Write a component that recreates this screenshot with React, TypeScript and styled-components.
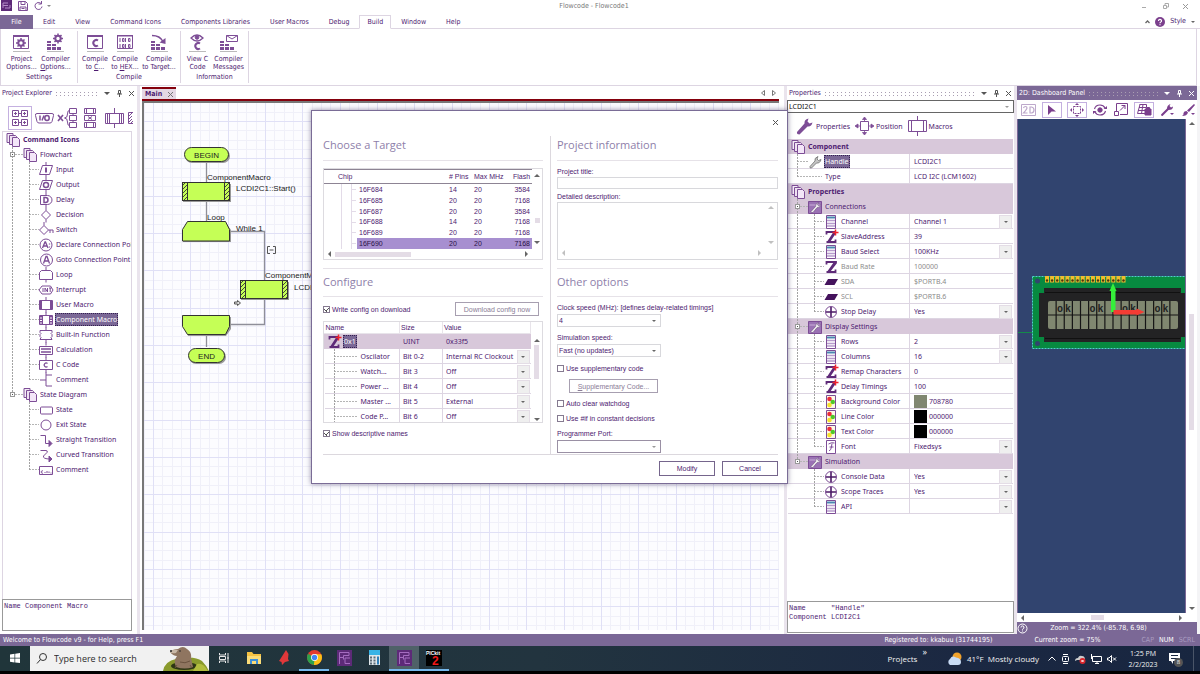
import React from 'react';
import styled, { createGlobalStyle, css } from 'styled-components';

const ink = '#4d1a70';
const stroke = '#7d4d96';
const band = '#d8c8da';
const bar = '#7b6896';
const line = '#ddd5e2';
const uiFont = '"DejaVu Sans Condensed", "DejaVu Sans", sans-serif';
const gridFont = '"Noto Sans", sans-serif';
const dialogFont = '"Liberation Sans", Arial, sans-serif';
const monoFont = '"Liberation Mono", monospace';

const Global = createGlobalStyle`
  *, *::before, *::after { box-sizing: border-box; }
  html, body { margin: 0; background: #fff; }
  body { font: 7px/9px ${uiFont}; color: ${ink}; }
  button, input, select, textarea { font: inherit; color: inherit; margin: 0; padding: 0; border: 0; border-radius: 0; background: none; }
  ul { list-style: none; margin: 0; padding: 0; }
  svg { display: block; flex: none; overflow: visible; }
`;

const Screen = styled.div`
  position: relative;
  display: flex;
  flex-direction: column;
  min-height: 100vh;
  overflow: hidden;
`;

/* ---------- icons ---------- */

const iconShapes: Record<string, React.ReactNode> = {
  folders: (
    <>
      <path d="M1 .5h6v9h-6z" fill="#f5ecf7" />
      <path d="M3.500 2.500h6l1 1v8h-7z" fill="#efe2f2" />
      <path d="M6.500 4.500h5l2 2v7h-7z" fill="#f3e6f8" />
    </>
  ),
  input: <><path d="M7 -1v3M7 12v2M3.500 2.500h10l-3 9h-10z" fill="none" /><path d="M7 4.500v5" strokeWidth="2" /></>,
  output: <><path d="M7 -1v3M7 12v2M3.500 2.500h10l-3 9h-10z" fill="none" /><circle cx="7" cy="7" r="2.500" fill="none" strokeWidth="1.500" /></>,
  delay: <><path d="M7 -1v3M7 12v2M1.500 2.500h7a4 4 0 0 1 0 9h-7z" fill="none" /><path d="M5 4.500h1.500a2.500 2.500 0 0 1 0 5H5z" fill="none" strokeWidth="1.500" /></>,
  decision: <path d="M7 -1v3.500M7 11.500v3M7 2.500l4.500 4.500L7 11.500 2.500 7z" fill="none" />,
  switch: <path d="M5 -1v3.500M5 2.500l4.500 4.500L5 11.500.500 7zM9.500 7h4.500v3M11 7v3" fill="none" />,
  declare: <><circle cx="7" cy="7" r="6" fill="none" /><path d="M3.500 10l2.500-6h.500l2.500 6M4.500 8h3.500M10.500 5.500v1M10.500 8.500v1" fill="none" strokeWidth="1.300" /></>,
  goto: <><circle cx="7.500" cy="7" r="6" fill="none" /><path d="M4.500 10.500l2.500-7h1l2.500 7M5.500 8h4" fill="none" strokeWidth="1.300" /></>,
  loop: <path d="M7 -1v3.500M7 11.500v3M.500 11.500V4.500l2-2h9l2 2v7z" fill="none" />,
  interrupt: <><path d="M3 3h8.500l2.500 4-2.500 4H3L0 7z" fill="none" /><path d="M4 5v4M6 9V5l2.500 4V5M10 5h2.500M11.200 5v4" fill="none" /></>,
  userMacro: <><path d="M7 -1v3.500M7 11.500v3M.500 2.500h13v9H.500z" fill="none" /><path d="M2 3v8M12 3v8" strokeWidth="2" /></>,
  componentMacro: <><path d="M7 -1v3.500M7 11.500v3M.500 2.500h13v9H.500zM3.500 3v8M10.500 3v8" fill="none" /><path d="M2 3v8M12 3v8" strokeWidth="2" strokeDasharray="1.500 1" /></>,
  builtIn: <path d="M7 -1v3.500M7 11.500v3M1 2.500h12M1 11.500h12M1 2.500v2l1 1-1 1v2l1 1-1 2M13 2.500v2l-1 1 1 1v2l-1 1 1 2" fill="none" />,
  calculation: <><path d="M7 -1v3.500M7 11.500v3M.500 3.500h13v8H.500z" fill="none" /><path d="M2 6h10M2 9h10" strokeWidth="1.500" /></>,
  cCode: <><path d="M7 -1v3.500M7 11.500v3M.500 2.500h13v9H.500z" fill="none" /><path d="M8.500 5.500a2 2 0 1 0 0 3" fill="none" strokeWidth="1.300" /></>,
  bracket: <path d="M7 -1v3M1 7h6M13 2H7v11h6" fill="none" />,
  state: <rect x="1.500" y="4" width="12" height="7" rx="1" fill="none" />,
  exitState: <circle cx="7" cy="7" r="5" fill="none" />,
  straight: <><path d="M1.500 2.500h5v8h5" fill="none" /><path d="M10 7.500l3 3-3 3z" fill={stroke} /></>,
  curved: <><path d="M1.500 2.500h5.500q2 0 1 2L4.500 8q-1 3 7 3" fill="none" /><path d="M10 8l3 3-3 3z" fill={stroke} /></>,
  stateComment: <><path d="M.500 3.500h13v8H.500z" fill="none" /><path d="M4 8a1.200 1.200 0 1 0 0 2M6 9v1M8 8v2M10 8.500v1.500M11.500 10h1" fill="none" /></>,
  wrenchGrey: <path d="M2 11.500l5-5.500q-1-3 3-4.500l-1 2.500 1.500 1.500L13 4.500q-1 4-4.500 3.500L3.500 13q-2 .5-1.500-1.500z" fill="#c4c4c4" stroke="#6e6e6e" strokeWidth=".8" />,
  group: <><path d="M.500 1.500h13v12H.500z" fill="#9a72b4" /><path d="M1.500 5h11" stroke="#c9aed8" /><path d="M3 11.500l4.500-5q-.5-3 3-4l-1 2.200 1 1 2.200-1q-.5 3.200-3.700 3L5 12.500q-2 .5-2-1z" fill="#eee" stroke="#6c4a80" strokeWidth=".6" /></>,
  list: <><path d="M2.500.500h9v13h-9z" fill="#fff" /><path d="M3 2.500h8" stroke="#4a86b0" strokeWidth="2" /><path d="M3 5.500h8M3 8.500h8M3 11h8" stroke="#b79ccc" strokeWidth="1.600" /></>,
  z: <path d="M2.500 4.500V2h9.500v1L5 12h6.500v-2.500M11 2L4 12H2.500" fill="none" stroke="#5e2a78" strokeWidth="1.800" />,
  zPlus: <><path d="M2.500 4.500V2H11v1L5 12h6.500v-2.500M10.500 2L4 12H2.500" fill="none" stroke="#5e2a78" strokeWidth="1.800" /><path d="M11.500-.5v6M8.500 2.500h6" stroke="#f0242c" strokeWidth="1.500" /></>,
  pin: <path d="M4 4h10l-3.500 6H.500z" fill="#44125c" stroke="none" />,
  cross: <><circle cx="7" cy="7" r="5.500" fill="none" /><path d="M7 2v10M2 7h10" stroke="#4b1a66" strokeWidth="1.600" /></>,
  color: <><path d="M2.500.500h9v13h-9z" fill="#fdfae6" /><circle cx="5.500" cy="4" r="2.300" fill="#ee2d3a" stroke="none" /><circle cx="8.700" cy="7" r="2.300" fill="#50c828" stroke="none" /><circle cx="5.500" cy="10" r="2.300" fill="#f6e22a" stroke="none" /></>,
  font: <><path d="M2.500.500h9v13h-9z" fill="#fff" /><path d="M4.500 4q3-2 6-1M8 3.500q-1 8-3 7M5.500 7h4" fill="none" /></>,
};

const Icon = ({ name }: { name: string }) => (
  <svg width="14" height="14" viewBox="0 0 14 14" stroke={stroke} strokeWidth="1" aria-hidden="true">
    {iconShapes[name]}
  </svg>
);

const Tri = styled.i<{ $dir?: 'up' | 'down' | 'left' | 'right'; $c?: string; $s?: number }>`
  display: block;
  flex: none;
  width: 0;
  height: 0;
  border: ${p => p.$s ?? 3}px solid transparent;
  ${p => {
    const c = p.$c ?? '#666';
    switch (p.$dir) {
      case 'up': return css`border-top: 0; border-bottom-color: ${c};`;
      case 'left': return css`border-left: 0; border-right-color: ${c};`;
      case 'right': return css`border-right: 0; border-left-color: ${c};`;
      default: return css`border-bottom: 0; border-top-color: ${c};`;
    }
  }}
`;

const IconButton = styled.button<{ $w?: number; $h?: number; $framed?: boolean }>`
  display: flex;
  flex: none;
  align-items: center;
  justify-content: center;
  width: ${p => p.$w ?? 12}px;
  height: ${p => p.$h ?? 12}px;
  border: ${p => (p.$framed ? '1px solid #c4b0e0' : '0')};
`;

/* ---------- title bar, menu and ribbon ---------- */

const TitleBar = styled.header`
  display: grid;
  grid-template-columns: 1fr auto 1fr;
  align-items: center;
  height: 15px;
  padding: 0 12px 3px 0;
  color: #777;
`;
const QuickAccess = styled.div`
  display: flex;
  align-items: center;
  gap: 1px;
`;
const WindowButtons = styled(QuickAccess)`
  justify-content: flex-end;
  gap: 10px;
`;
const MenuBar = styled.nav`
  display: flex;
  height: 14px;
  border-bottom: 1px solid ${line};
`;
const MenuTab = styled.button<{ $kind?: 'file' | 'active' }>`
  flex: none;
  height: 14px;
  padding: 0 10px;
  border: 1px solid transparent;
  border-width: 1px 0;
  ${p => p.$kind === 'file' && css`background: ${bar}; color: #fff; width: 33px; border: 0;`}
  ${p => p.$kind === 'active' && css`background: #fff; border: 1px solid ${line}; border-bottom-color: #fff; padding: 0 7px;`}
`;
const MenuEnd = styled.div`
  display: flex;
  align-items: center;
  gap: 5px;
  margin-left: auto;
  padding-right: 5px;
`;
const Ribbon = styled.div`
  display: flex;
  height: 57px;
  padding: 2px 0;
  margin-right: 3px;
  border: 1px solid ${line};
  border-top: 0;
`;
const RibbonGroup = styled.section<{ $w: number }>`
  display: flex;
  flex: none;
  flex-direction: column;
  width: ${p => p.$w}px;
  border-right: 1px solid ${line};
`;
const RibbonButtons = styled.div`
  display: flex;
  flex: 1;
  justify-content: center;
`;
const RibbonButton = styled.button<{ $w: number }>`
  display: flex;
  flex-direction: column;
  align-items: center;
  width: ${p => p.$w}px;
  padding-top: 3px;
  line-height: 8px;
  white-space: nowrap;
`;
const RibbonIcon = styled.span`
  display: block;
  width: 17px;
  margin-bottom: 3px;
  border-bottom: 1px solid #bbb;
`;
const RibbonCaption = styled.h2`
  margin: 0;
  font: 7px/12px ${uiFont};
  text-align: center;
`;

const bars = <><path d="M0 7h4v2H0zM0 10h4v2H0zM0 13h4v3H0zM5 10h4v2H5zM5 13h4v3H5zM10 13h4v3h-4z" fill={stroke} stroke="none" /></>;
const gear = (cx: number, cy: number) => (
  <g transform={`translate(${cx} ${cy})`}>
    <circle r="2.700" fill="none" strokeWidth="2" />
    <path d="M0-5v2M0 3v2M-5 0h2M3 0h2M-3.500-3.500l1.500 1.500M2 2l1.500 1.500M-3.500 3.500L-2 2M2-2l1.500-1.500" strokeWidth="1.500" />
  </g>
);
const ribbonShapes: Record<string, React.ReactNode> = {
  project: <><path d="M.500 1.500h15v13H.500z" fill="none" /><path d="M0 1h16v2H0z" fill={stroke} stroke="none" />{gear(8, 9)}</>,
  compiler: <>{bars}{gear(11, 4.5)}</>,
  toC: <><path d="M.500 1.500h15v13H.500z" fill="none" /><path d="M0 1h16v2H0z" fill={stroke} stroke="none" /><path d="M11 6.500a3 3 0 1 0 0 5" fill="none" strokeWidth="2" /></>,
  toHex: <><path d="M.500 1.500h15v13H.500z" fill="none" /><path d="M3 4v4M8.500 4v4M3 10v4M8.500 10v4M5.500 4.500h1.500v3H5.500zM11.500 4.500H13v3h-1.500zM5.500 10.500h1.500v3H5.500zM11.500 10.500H13v3h-1.500z" fill="none" /><path d="M0 1h16v1.500H0z" fill={stroke} stroke="none" /></>,
  toTarget: <>{bars}<path d="M1 1.500q8 0 11 6" fill="none" strokeWidth="1.500" /><path d="M8.500 8.500L14.500 4v6z" fill={stroke} stroke="none" /></>,
  viewC: <><path d="M2 4q6-6 12 0-6 6-12 0z" fill="none" strokeWidth="1.300" /><circle cx="8" cy="3.500" r="1.800" fill={stroke} /><path d="M11 9.500a3 3 0 1 0 0 5" fill="none" strokeWidth="2" /></>,
  messages: <>{bars}<path d="M6.500 1.500h11v6h-11zM6.500 1.500l5.500 3.500 5.500-3.500" fill="#fff" /></>,
};

type RibbonItem = { icon: string; w: number; lines: [React.ReactNode, React.ReactNode] };
const ribbon: { title: string; w: number; items: RibbonItem[] }[] = [
  { title: 'Settings', w: 77, items: [
    { icon: 'project', w: 33, lines: ['Project', 'Options...'] },
    { icon: 'compiler', w: 35, lines: ['Compiler', <><u>O</u>ptions...</>] },
  ] },
  { title: 'Compile', w: 103, items: [
    { icon: 'toC', w: 30, lines: ['Compile', <>to <u>C</u>...</>] },
    { icon: 'toHex', w: 30, lines: ['Compile', <>to <u>H</u>EX...</>] },
    { icon: 'toTarget', w: 38, lines: ['Compile', 'to Target...'] },
  ] },
  { title: 'Information', w: 68, items: [
    { icon: 'viewC', w: 28, lines: ['View C', 'Code'] },
    { icon: 'messages', w: 34, lines: ['Compiler', 'Messages'] },
  ] },
];

const menus = ['Edit', 'View', 'Command Icons', 'Components Libraries', 'User Macros', 'Debug', 'Build', 'Window', 'Help'];

const TopArea = () => (
  <>
    <TitleBar>
      <QuickAccess>
        <svg width="12" height="12" viewBox="0 0 12 12"><path d="M1 0h11v11H1z" fill="#5d2a78" /><path d="M3 8V3h5M5 8h5V5M3 5.500h5" stroke="#b48cc8" fill="none" /></svg>
        <IconButton $w={20} aria-label="Save"><svg width="10" height="10" viewBox="0 0 10 10" stroke={stroke} fill="none"><path d="M.500.500h7l2 2v7h-9zM3 .500v3h4v-3M2 9.500V6h6v3.500M3.500 7.500h3" /></svg></IconButton>
        <IconButton $w={8} aria-label="Redo"><svg width="9" height="10" viewBox="0 0 9 10" stroke={stroke} fill="none"><path d="M7 2.500a3.500 3.500 0 1 0 1 3M7.500 0v3H4.500" /></svg></IconButton>
        <IconButton aria-label="Customise"><Tri $s={2} $c="#888" /></IconButton>
      </QuickAccess>
      <span>Flowcode - Flowcode1</span>
      <WindowButtons>
        <IconButton aria-label="Minimise"><svg width="5" height="5" stroke="#aaa"><path d="M0 3.500h4" /></svg></IconButton>
        <IconButton aria-label="Restore"><svg width="6" height="6" stroke="#aaa" fill="none"><path d="M.500 2.500h3v3h-3zM2 2V.500h3.500V4H4" /></svg></IconButton>
        <IconButton $w={6} aria-label="Close"><svg width="5" height="5" stroke="#999"><path d="M0 0l5 5M5 0L0 5" /></svg></IconButton>
      </WindowButtons>
    </TitleBar>
    <MenuBar>
      <MenuTab $kind="file">File</MenuTab>
      {menus.map(m => <MenuTab key={m} $kind={m === 'Build' ? 'active' : undefined}>{m}</MenuTab>)}
      <MenuEnd>
        <svg width="5" height="4" stroke="#666" fill="none"><path d="M.500 3L2.500 1l2 2" strokeWidth="1.300" /></svg>
        <svg width="10" height="10" viewBox="0 0 10 10"><circle cx="5" cy="5" r="5" fill="#7b3f8d" /><path d="M3.500 4a1.500 1.500 0 1 1 2 1.300q-.5.2-.5 1M5 7.300v1" stroke="#fff" fill="none" strokeWidth="1.200" /></svg>
        <span>Style</span>
        <Tri $s={2} />
      </MenuEnd>
    </MenuBar>
    <Ribbon>
      {ribbon.map(g => (
        <RibbonGroup key={g.title} $w={g.w}>
          <RibbonButtons>
            {g.items.map(i => (
              <RibbonButton key={i.icon} $w={i.w}>
                <RibbonIcon><svg width="16" height="17" viewBox="0 0 16 17" stroke={stroke}>{ribbonShapes[i.icon]}</svg></RibbonIcon>
                <span>{i.lines[0]}</span>
                <span>{i.lines[1]}</span>
              </RibbonButton>
            ))}
          </RibbonButtons>
          <RibbonCaption>{g.title}</RibbonCaption>
        </RibbonGroup>
      ))}
    </Ribbon>
  </>
);

/* ---------- panels ---------- */

const Workspace = styled.main`
  display: flex;
  flex: 1;
  min-height: 0;
`;
const Panel = styled.section<{ $w: number }>`
  display: flex;
  flex: none;
  flex-direction: column;
  width: ${p => p.$w}px;
`;
const Splitter = styled.div`
  flex: none;
  width: 3px;
  background: #eae4ed;
`;
const PanelHeader = styled.header<{ $dark?: boolean }>`
  display: flex;
  flex: none;
  align-items: center;
  height: 14px;
  padding: 1px 0 0 2px;
  background: ${p => (p.$dark ? bar : '#fff')};
  color: ${p => (p.$dark ? '#fff' : ink)};
`;
const PanelTitle = styled.h2`
  margin: 0;
  font: inherit;
`;
const Dots = styled.span`
  flex: 1;
  height: 4px;
  margin: 1px 3px 0 4px;
  background:
    linear-gradient(#b9afc0, #b9afc0) 0 0 / 1px 1px,
    linear-gradient(#b9afc0, #b9afc0) 0 0 / 1px 1px;
  background: conic-gradient(from 0deg at 1px 1px, transparent 75%, #a99eb2 0) 0 0 / 4px 3px;
`;

const PanelTop = ({ title, dark }: { title: string; dark?: boolean }) => {
  const c = dark ? '#fff' : '#555';
  return (
    <PanelHeader $dark={dark}>
      <PanelTitle>{title}</PanelTitle>
      <Dots />
      <IconButton aria-label="Panel menu"><Tri $c={c} /></IconButton>
      <IconButton aria-label="Pin"><svg width="5" height="7" stroke={c} fill="none"><path d="M1.500.500h2v3h-2zM0 4h5M2.500 4v3" /></svg></IconButton>
      <IconButton aria-label="Close panel"><svg width="5" height="5" stroke={c}><path d="M0 0l5 5M5 0L0 5" /></svg></IconButton>
    </PanelHeader>
  );
};

const ExplorerTools = styled.div`
  display: flex;
  align-items: center;
  gap: 3px;
  height: 31px;
  padding: 5px 0 1px 8px;
  overflow: hidden;
`;

/* Tree branches: each gutter carries its vertical and horizontal dotted lines. */
const Gutter = styled.span<{ $w: number; $x: number; $v?: 'full' | 'half'; $h?: boolean }>`
  display: flex;
  flex: none;
  align-items: center;
  width: ${p => p.$w}px;
  height: 15px;
  padding-left: ${p => p.$x - 2}px;
  background-repeat: no-repeat;
  background-image:
    ${p => (p.$v ? 'repeating-linear-gradient(#a3a3a3 0 2px, transparent 2px 3px)' : 'none')},
    ${p => (p.$h ? 'repeating-linear-gradient(90deg, #b5b5b5 0 2px, transparent 2px 3px)' : 'none')};
  background-position: ${p => p.$x}px 0, ${p => p.$x}px 7px;
  background-size: 1px ${p => (p.$v === 'half' ? '8px' : '15px')}, 100% 1px;
`;
const Expander = styled.i`
  width: 5px;
  height: 5px;
  border: 1px solid #999;
  background: linear-gradient(#555, #555) 1px 1px / 1px 1px no-repeat #fff;
`;
const TreeBox = styled.div`
  flex: 1;
  margin: 0 5px 0 2px;
  border: 1px solid ${line};
  border-bottom: 0;
  overflow: hidden;
  font-family: ${gridFont};
`;
const TreeRow = styled.li`
  display: flex;
  align-items: center;
  height: 15px;
  white-space: nowrap;
`;
const NodeLabel = styled.span<{ $sel?: boolean; $strong?: boolean; $dim?: boolean }>`
  margin-left: 2px;
  padding: 0 1px;
  line-height: 13px;
  font-weight: ${p => (p.$strong ? 700 : 400)};
  color: ${p => (p.$sel ? '#fff' : p.$dim ? '#8d8d8d' : 'inherit')};
  ${p => p.$sel && css`background: ${bar}; outline: 1px dotted #332050; outline-offset: -1px;`}
`;
const NoteBox = styled.pre<{ $gap?: number }>`
  flex: none;
  height: 32px;
  margin: 0 ${p => p.$gap ?? 0}px 1px;
  padding: 2px 1px;
  border: 1px solid #999;
  font: 7px/9px ${monoFont};
`;
const ExplorerNote = styled(NoteBox)`
  margin: 0 5px 3px 2px;
`;

const flowNodes: [string, string][] = [
  ['input', 'Input'], ['output', 'Output'], ['delay', 'Delay'], ['decision', 'Decision'], ['switch', 'Switch'],
  ['declare', 'Declare Connection Point'], ['goto', 'Goto Connection Point'], ['loop', 'Loop'], ['interrupt', 'Interrupt'],
  ['userMacro', 'User Macro'], ['componentMacro', 'Component Macro'], ['builtIn', 'Built-in Function'],
  ['calculation', 'Calculation'], ['cCode', 'C Code'], ['bracket', 'Comment'],
];
const stateNodes: [string, string][] = [
  ['state', 'State'], ['exitState', 'Exit State'], ['straight', 'Straight Transition'], ['curved', 'Curved Transition'], ['stateComment', 'Comment'],
];

const Leaves = ({ nodes, rootLine }: { nodes: [string, string][]; rootLine?: boolean }) => (
  <>
    {nodes.map(([icon, label], i) => (
      <TreeRow key={icon}>
        <Gutter $w={20} $x={9} $v={rootLine ? 'full' : undefined} />
        <Gutter $w={16} $x={6} $v={i === nodes.length - 1 ? 'half' : 'full'} $h />
        <Icon name={icon} />
        <NodeLabel $sel={icon === 'componentMacro'}>{label}</NodeLabel>
      </TreeRow>
    ))}
  </>
);

const Explorer = () => (
  <Panel $w={137}>
    <PanelTop title="Project Explorer" />
    <ExplorerTools>
      <IconButton $w={24} $h={24} $framed aria-label="Command icons"><svg width="16" height="16" viewBox="0 0 16 16" stroke={stroke} fill="none"><path d="M.500.500h6v6h-6zM9.500.500h6v6h-6zM.500 9.500h6v6h-6zM9.500 9.500h6v6h-6zM3.500 2v3M2 3.500h3M12.500 2v3M11 3.500h3M3.500 11v3M2 12.500h3M12.500 11v3M11 12.500h3M6.500 3.500h3M6.500 12.500h3" /></svg></IconButton>
      <IconButton $w={19} $h={24} aria-label="Ports"><svg width="19" height="12" viewBox="0 0 19 12" stroke={stroke} fill="none"><path d="M2 1.500h15q2 0 1.500 2l-1.500 6q-.5 1.500-2 1.500H4q-1.500 0-2-1.500l-1.500-6q-.5-2 1.500-2z" /><path d="M5 3.500v5M9 3.500l-2 5" strokeWidth="1.500" /><ellipse cx="12" cy="6" rx="2.200" ry="2.500" strokeWidth="1.500" /></svg></IconButton>
      <IconButton $w={20} $h={24} aria-label="Variables"><svg width="20" height="20" viewBox="0 0 20 20" stroke={stroke} fill="none"><path d="M1 7l5 6M6 7l-5 6" strokeWidth="1.600" /><path d="M7.500 10q3 0 3-4t2-3.500M7.500 10q3 0 3 4t2 3.500M12.500.500h7v5h-7zM12.500 7.500h7v5h-7zM12.500 14.500h7v5h-7zM16 5.500v2M16 12.500v2" /></svg></IconButton>
      <IconButton $w={20} $h={24} aria-label="Macros"><svg width="12" height="20" viewBox="0 0 12 20" stroke={stroke} fill="none"><path d="M.500.500h11v5H.500zM.500 7.500h11v5H.500zM.500 14.500h11v5H.500zM2.500.500v5M9.500.500v5M4 8.500l4 3M8 8.500l-4 3M2.500 14.500v5M9.500 14.500v5" /></svg></IconButton>
      <IconButton $w={22} $h={24} aria-label="Blocks"><svg width="19" height="20" viewBox="0 0 19 20" stroke={stroke} fill="none"><path d="M.500 5.500h18v10H.500zM2.500 5.500v10M4.500 5.500v10M14.500 5.500v10M16.500 5.500v10M9.500 0v5M9.500 16v4" /></svg></IconButton>
      <IconButton $w={5} $h={24} aria-label="More"><svg width="5" height="12" viewBox="0 0 5 12" stroke={stroke} fill="none"><path d="M5 .500H.500v11H5M1 4l3-3M1 7l3-3M1 10l3-3M3 11l2-2" /></svg></IconButton>
    </ExplorerTools>
    <TreeBox>
      <ul>
        <TreeRow><Gutter $w={3} $x={2} /><Icon name="folders" /><NodeLabel $strong>Command Icons</NodeLabel></TreeRow>
        <TreeRow><Gutter $w={20} $x={9} $v="full" $h><Expander /></Gutter><Icon name="folders" /><NodeLabel>Flowchart</NodeLabel></TreeRow>
        <Leaves nodes={flowNodes} rootLine />
        <TreeRow><Gutter $w={20} $x={9} $v="half" $h><Expander /></Gutter><Icon name="folders" /><NodeLabel>State Diagram</NodeLabel></TreeRow>
        <Leaves nodes={stateNodes} />
      </ul>
    </TreeBox>
    <ExplorerNote>Name Component Macro</ExplorerNote>
  </Panel>
);

/* ---------- flowchart document ---------- */

const Document = styled.section`
  display: flex;
  flex: 1;
  flex-direction: column;
  min-width: 0;
  padding: 1px 5px 4px 2px;
`;
const TabStrip = styled.div`
  display: flex;
  flex: none;
  height: 14px;
  border-bottom: 2px solid #84000c;
`;
const DocTab = styled.button`
  display: flex;
  align-items: center;
  gap: 6px;
  height: 12px;
  padding: 0 3px;
  border-top: 2px solid #84000c;
  background: #e4d8e4;
  font-weight: 700;
`;
const TabArrows = styled.div`
  display: flex;
  align-items: center;
  gap: 7px;
  margin-left: auto;
  padding-right: 3px;
`;
const Canvas = styled.svg`
  flex: 1;
  width: 100%;
  min-height: 0;
  border: solid #777;
  border-width: 2px 0 0 2px;
  background: #fcfcff;
  font: 8px ${dialogFont};
  overflow: hidden;
`;

const minor = [9, 19, 28, 47, 56, 65, 84, 93, 103];
const major = [0, 37, 75];
const gridPath = (at: number[]) => at.map(n => `M${n + 0.5} 0v112M0 ${n + 0.5}h112`).join('');

const MacroBox = ({ x, y }: { x: number; y: number }) => (
  <g transform={`translate(${x} ${y})`}>
    <rect x="1" y="2" width="48" height="18" fill="#999" />
    <rect x=".5" y=".5" width="47" height="18" fill="#c5ff56" stroke="#333" />
    <rect x=".5" y=".5" width="5" height="18" fill="url(#hatch)" stroke="#333" />
    <rect x="42.500" y=".5" width="5" height="18" fill="url(#hatch)" stroke="#333" />
  </g>
);
const Pill = ({ x, y, w, text }: { x: number; y: number; w: number; text: string }) => (
  <g transform={`translate(${x} ${y})`}>
    <rect x="1" y="2" width={w} height="14" rx="7" fill="#999" />
    <rect x=".5" y=".5" width={w - 1} height="14" rx="7" fill="#c5ff56" stroke="#333" />
    <text x={w / 2} y="11" textAnchor="middle">{text}</text>
  </g>
);

const Flowchart = () => (
  <Document>
    <TabStrip>
      <DocTab>Main <svg width="5" height="5" stroke="#777"><path d="M0 0l5 5M5 0L0 5" /></svg></DocTab>
      <TabArrows>
        <svg width="4" height="6" stroke="#777" fill="none"><path d="M3.500.500v5L.500 3z" /></svg>
        <svg width="4" height="6" stroke="#777" fill="none"><path d="M.500.500v5L3.500 3z" /></svg>
      </TabArrows>
    </TabStrip>
    <Canvas role="img" aria-label="Flowchart">
      <defs>
        <pattern id="paper" x="9" y="18" width="112" height="112" patternUnits="userSpaceOnUse">
          <path d={gridPath(minor)} stroke="#f0f0f9" />
          <path d={gridPath(major)} stroke="#e0e0f6" />
        </pattern>
        <pattern id="hatch" width="4" height="4" patternUnits="userSpaceOnUse">
          <rect width="4" height="4" fill="#c5ff56" />
          <path d="M-1 5L5-1M-1 1l2-2M3 5l2-2" stroke="#333" strokeWidth=".9" />
        </pattern>
      </defs>
      <rect width="100%" height="100%" fill="url(#paper)" />
      <g transform="translate(-144 -103)" fill="#222">
        <path d="M206.500 163v20M206.500 201v20M230 231.500h34.500V324.500H230M206.500 335v12" stroke="#8f8f99" strokeWidth="1.300" fill="none" />
        <Pill x={184} y={147} w={45} text="BEGIN" />
        <text x="207" y="180">ComponentMacro</text>
        <MacroBox x={182} y={182} />
        <text x="236" y="191">LCDI2C1::Start()</text>
        <text x="207" y="220">Loop</text>
        <path d="M188 223h38l5 7v12h-48v-12z" fill="#999" />
        <path d="M187.500 221.500h38l4 8v11.500h-47v-11.500z" fill="#c5ff56" stroke="#333" />
        <text x="236" y="231">While 1</text>
        <path d="M270 246.500h-2.500v7h2.500M273 246.500h2.500v7h-2.500M269.500 250h4" stroke="#555" fill="none" />
        <text x="265" y="278">ComponentM</text>
        <MacroBox x={240} y={280} />
        <text x="294" y="290">LCDI</text>
        <path d="M234.500 302h3v-1.500l3 2.500-3 2.500V304h-3z" fill="#ddd" stroke="#555" />
        <path d="M183 317h48v12l-5 7h-38z" fill="#999" />
        <path d="M182.500 315.500h47v11l-4 8h-38l-5-8z" fill="#c5ff56" stroke="#333" />
        <Pill x={188} y={348} w={37} text="END" />
      </g>
    </Canvas>
  </Document>
);

/* ---------- properties panel ---------- */

const Drop = styled.span<{ $flat?: boolean; $h?: number; $c?: string }>`
  position: relative;
  display: block;
  height: ${p => p.$h ?? 13}px;
  border: ${p => (p.$flat ? '0' : `1px solid ${p.$c ?? '#d8d8dc'}`)};
  select { appearance: none; display: block; width: 100%; height: 100%; padding: 0 16px 0 1px; outline: 0; }
  ${p => p.$flat && css`select { padding-left: 0; }`}
`;
const DropArrow = styled.span<{ $boxed?: boolean }>`
  position: absolute;
  top: 0;
  right: ${p => (p.$boxed ? 1 : 0)}px;
  bottom: 0;
  display: flex;
  align-items: center;
  justify-content: center;
  width: 13px;
  pointer-events: none;
  ${p => p.$boxed && css`background: #efefef; border: 1px solid #e4dde6;`}
`;
const Picker = ({ label, value, id, flat, h, c }: { label: string; value: string; id?: string; flat?: boolean; h?: number; c?: string }) => (
  <Drop $flat={flat} $h={h} $c={c}>
    <select id={id} aria-label={id ? undefined : label} defaultValue={value}><option>{value}</option></select>
    <DropArrow $boxed={flat}><Tri $s={2} $c={c ? '#999' : '#666'} /></DropArrow>
  </Drop>
);

const HandleCombo = styled.div`
  flex: none;
  font-family: ${gridFont};
  color: #111;
`;
const PropTools = styled.div`
  display: flex;
  align-items: center;
  gap: 5px;
  height: 26px;
  padding-left: 9px;
  font-family: ${gridFont};
`;
const PropTool = styled.button`
  display: flex;
  align-items: center;
  gap: 2px;
`;
const PropTable = styled.table`
  width: calc(100% - 2px);
  margin-left: 1px;
  border-collapse: collapse;
  table-layout: fixed;
  font-family: ${gridFont};
`;
const PropRow = styled.tr<{ $band?: boolean; $dim?: boolean }>`
  height: 15px;
  background: ${p => (p.$band ? band : '#fff')};
  color: ${p => (p.$dim ? '#8b8b8b' : ink)};
  th, td { height: 15px; padding: 0; font-weight: 400; text-align: left; white-space: nowrap; box-shadow: inset 0 -1px ${p => (p.$band ? 'transparent' : line)}; }
  td { padding-left: 4px; border-left: 1px solid ${p => (p.$band ? 'transparent' : line)}; }
`;
const Cell = styled.div`
  display: flex;
  align-items: center;
  height: 15px;
`;
const Swatch = styled.i`
  width: 13px;
  height: 13px;
  margin-right: 2px;
`;
const Spacer = styled.div`
  flex: 1;
`;

type Prop = { icon: string; name: string; value: string; pick?: boolean; dim?: boolean; color?: string };
const sections: { title: string; props: Prop[] }[] = [
  { title: 'Connections', props: [
    { icon: 'list', name: 'Channel', value: 'Channel 1', pick: true },
    { icon: 'zPlus', name: 'SlaveAddress', value: '39' },
    { icon: 'list', name: 'Baud Select', value: '100KHz', pick: true },
    { icon: 'z', name: 'Baud Rate', value: '100000', dim: true },
    { icon: 'pin', name: 'SDA', value: '$PORTB.4', dim: true },
    { icon: 'pin', name: 'SCL', value: '$PORTB.6', dim: true },
    { icon: 'cross', name: 'Stop Delay', value: 'Yes', pick: true },
  ] },
  { title: 'Display Settings', props: [
    { icon: 'list', name: 'Rows', value: '2', pick: true },
    { icon: 'list', name: 'Columns', value: '16', pick: true },
    { icon: 'zPlus', name: 'Remap Characters', value: '0' },
    { icon: 'zPlus', name: 'Delay Timings', value: '100' },
    { icon: 'color', name: 'Background Color', value: '708780', color: '#808770' },
    { icon: 'color', name: 'Line Color', value: '000000', color: '#000000' },
    { icon: 'color', name: 'Text Color', value: '000000', color: '#000000' },
    { icon: 'font', name: 'Font', value: 'Fixedsys', pick: true },
  ] },
  { title: 'Simulation', props: [
    { icon: 'cross', name: 'Console Data', value: 'Yes', pick: true },
    { icon: 'cross', name: 'Scope Traces', value: 'Yes', pick: true },
    { icon: 'list', name: 'API', value: '', pick: true },
  ] },
];

const Properties = () => (
  <Panel $w={227}>
    <PanelTop title="Properties" />
    <HandleCombo><Picker label="Component" value="LCDI2C1" c="#666" /></HandleCombo>
    <PropTools>
      <PropTool><svg width="18" height="18" viewBox="0 0 18 18"><path d="M1 15l7.500-8.500Q8 2.500 12.500 1.500l-1 3 2 2 3-1q-1 4.500-5 4L3.500 17.500Q.500 17.500 1 15z" fill={stroke} /></svg>Properties</PropTool>
      <PropTool><svg width="19" height="18" viewBox="0 0 19 18" stroke={stroke} fill={stroke}><path d="M5.500 4.500h8v9h-8z" fill="none" /><path d="M9.500 0l2 2.500h-4zM9.500 18l2-2.500h-4zM0 9l3-2v4zM19 9l-3-2v4zM3 9h2M14 9h2M9.500 2v2M9.500 14v2" strokeWidth=".8" /></svg>Position</PropTool>
      <PropTool><svg width="19" height="20" viewBox="0 0 19 20" stroke={stroke} fill="none"><path d="M.500 4.500h18v11H.500zM3.500 4.500v11M15.500 4.500v11M9.500 0v4M9.500 16v4" /></svg>Macros</PropTool>
    </PropTools>
    <PropTable>
      <colgroup><col style={{ width: '54%' }} /><col /></colgroup>
      <tbody>
        <PropRow $band><th colSpan={2}><Cell><Gutter $w={3} $x={2} /><Icon name="folders" /><NodeLabel $strong>Component</NodeLabel></Cell></th></PropRow>
        <PropRow><th><Cell><Gutter $w={20} $x={9} $v="full" $h /><Icon name="wrenchGrey" /><NodeLabel $sel>Handle</NodeLabel></Cell></th><td>LCDI2C1</td></PropRow>
        <PropRow><th><Cell><Gutter $w={34} $x={9} $v="half" $h /><NodeLabel>Type</NodeLabel></Cell></th><td>LCD I2C (LCM1602)</td></PropRow>
        <PropRow $band><th colSpan={2}><Cell><Gutter $w={3} $x={2} /><Icon name="folders" /><NodeLabel $strong>Properties</NodeLabel></Cell></th></PropRow>
        {sections.map((s, si) => {
          const last = si === sections.length - 1;
          return (
            <React.Fragment key={s.title}>
              <PropRow $band><th colSpan={2}><Cell><Gutter $w={20} $x={9} $v={last ? 'half' : 'full'} $h><Expander /></Gutter><Icon name="group" /><NodeLabel>{s.title}</NodeLabel></Cell></th></PropRow>
              {s.props.map((p, i) => (
                <PropRow key={p.name} $dim={p.dim}>
                  <th>
                    <Cell>
                      <Gutter $w={20} $x={9} $v={last ? undefined : 'full'} />
                      <Gutter $w={16} $x={6} $v={i === s.props.length - 1 ? 'half' : 'full'} $h />
                      <Icon name={p.icon} />
                      <NodeLabel $dim={p.dim}>{p.name}</NodeLabel>
                    </Cell>
                  </th>
                  <td>
                    {p.pick ? <Picker flat h={14} label={p.name} value={p.value} />
                      : <Cell>{p.color && <Swatch style={{ background: p.color }} />}{p.value}</Cell>}
                  </td>
                </PropRow>
              ))}
            </React.Fragment>
          );
        })}
      </tbody>
    </PropTable>
    <Spacer />
    <NoteBox>{'Name      "Handle"\nComponent LCDI2C1'}</NoteBox>
  </Panel>
);

/* ---------- dashboard panel ---------- */

const DashTools = styled.div`
  display: flex;
  flex: none;
  align-items: center;
  justify-content: space-between;
  height: 19px;
  padding: 0 1px 0 3px;
`;
const DashBody = styled.div`
  display: grid;
  flex: 1;
  grid-template-columns: 1fr 11px;
  grid-template-rows: 1fr 9px;
  min-height: 0;
`;
const Scene = styled.svg`
  width: 100%;
  height: 100%;
  min-height: 0;
  background: #31446f;
  border-left: 1px solid ${bar};
  border-right: 1px solid ${bar};
  overflow: hidden;
  font: 700 10px ${monoFont};
`;
const Scroll = styled.div<{ $row?: boolean; $pad?: number }>`
  display: flex;
  flex-direction: ${p => (p.$row ? 'row' : 'column')};
  align-items: center;
  justify-content: space-between;
  padding: ${p => (p.$row ? '0 4px' : `${p.$pad ?? 3}px 0`)};
`;
const Thumb = styled.i<{ $w: number; $h: number; $after?: number }>`
  width: ${p => p.$w}px;
  height: ${p => p.$h}px;
  background: #e4dce6;
  ${p => p.$after !== undefined && css`margin-bottom: auto; margin-top: ${p.$after}px;`}
`;
const ZoomBar = styled.footer`
  display: flex;
  flex: none;
  align-items: center;
  height: 12px;
  background: ${bar};
  color: #fff;
  span { flex: 1; padding-right: 28px; text-align: center; }
`;

const cells = Array.from({ length: 16 }, (_, i) => i);

const Dashboard = () => (
  <Panel $w={180}>
    <PanelTop title="2D: Dashboard Panel" dark />
    <DashTools>
      <IconButton $w={17} $h={13} aria-label="2D"><svg width="15" height="12" viewBox="0 0 15 12" stroke="#bda8cb" fill="none"><path d="M.500.500h14v11H.500z" /><path d="M2.500 4q.5-1.500 2-1.500t1.500 1.500q0 1-3.500 5h4M9 3h1.500q2.500.5 2.500 3t-2.500 3H9z" strokeWidth="1.200" /></svg></IconButton>
      <IconButton $w={20} $h={16} $framed aria-label="Select"><svg width="8" height="10" viewBox="0 0 8 10"><path d="M0 0l8 6.500H3.500L0 10z" fill="#7b3f8d" /></svg></IconButton>
      <IconButton $w={20} $h={16} $framed aria-label="Move"><svg width="14" height="14" viewBox="0 0 14 14" stroke="#7b3f8d"><path d="M3.500 3.500h7v7h-7z" fill="none" strokeDasharray="2 1" /><path d="M7 0l2 2H5zM7 14l2-2H5zM0 7l2-2v4zM14 7l-2-2v4z" fill="#7b3f8d" stroke="none" /></svg></IconButton>
      <IconButton $w={16} $h={16} aria-label="Rotate"><svg width="14" height="12" viewBox="0 0 14 12" stroke="#7b3f8d"><circle cx="7" cy="6" r="2.200" fill="#7b3f8d" /><path d="M1.500 5q1-4 5.500-4 3.500 0 5 3M12.500 7q-1 4-5.500 4-3.500 0-5-3" fill="none" strokeWidth="1.100" /><path d="M14 2v3h-3.500zM0 10V7h3.500z" fill="#7b3f8d" stroke="none" /></svg></IconButton>
      <IconButton $w={16} $h={16} aria-label="Scale"><svg width="14" height="13" viewBox="0 0 14 13" stroke="#7b3f8d" fill="none"><path d="M2.500 8V.500h11v11H6M.500 8.500h4v4h-4zM6 7.500l5-5M7.500 2.500H11V6" /></svg></IconButton>
      <IconButton $w={20} $h={16} $framed aria-label="Grid"><svg width="14" height="11" viewBox="0 0 14 11" stroke="#7b3f8d" fill="none"><path d="M2.500.500h7M2 3.500h7M1 6.500h7M.500 9.500h8M3 .500L.500 9.500M6 .5L4.500 9.500M9.500 .500v3" /><path d="M8 5h6v6H8zM9.500 5V3.500h3V5" fill="#7b3f8d" /></svg></IconButton>
      <IconButton $w={16} $h={16} aria-label="Tools"><svg width="13" height="12" viewBox="0 0 13 12"><path d="M0 10.500l6-6Q6 1 9.500 0L8.500 2l1.500 1.500 2-1q0 3.500-4.500 3.500l-6 6q-1.500 0-1.500-1.500zM9 9h4l-2 2z" fill="#7b3f8d" /></svg></IconButton>
      <IconButton $w={16} $h={16} aria-label="Brush"><svg width="13" height="12" viewBox="0 0 13 12"><path d="M12 0l1 1-6 7-2-1.500zM4.500 7L6 8.500Q5 12 0 12q2-1 1.500-3 .5-2 3-2zM9 9h4l-2 2z" fill="#7b3f8d" /></svg></IconButton>
    </DashTools>
    <DashBody>
      <Scene role="img" aria-label="LCD display">
        <g transform="translate(-1018 -119)">
          <path d="M1018 332.500h15" stroke="#148a4a" />
          <rect x="1032.500" y="276.500" width="160" height="72" fill="#078a40" stroke="#4fd3c8" strokeDasharray="2 1" />
          <circle cx="1037.500" cy="281" r="2.500" fill="#31446f" />
          <circle cx="1037.500" cy="343.500" r="2.500" fill="#31446f" />
          {cells.map(i => <g key={i}><rect x={1045 + i * 5.1} y="276" width="4" height="6.500" fill="#f2bd2c" /><circle cx={1047 + i * 5.1} cy="280.500" r="1.200" fill="#4a3510" /></g>)}
          <path d="M1044 288h137v5h12v44h-12v5h-137v-5h-5v-44h5z" fill="#232324" />
          <path d="M1045 292.500h135M1045 338.500h135" stroke="#111" />
          <rect x="1048" y="301" width="130" height="28" rx="2" fill="#808770" />
          <path d={cells.slice(1).map(i => `M${1048 + i * 8.125} 301v28`).join('') + 'M1048 315h130'} stroke="#151515" strokeWidth="1.200" />
          {[1, 5, 9, 13].map(i => <g key={i} fill="#222"><text x={1057 + (i - 1) * 8.125} y="312">o</text><text x={1065 + (i - 1) * 8.125} y="312">k</text></g>)}
          <path d="M1111 312v-21h-1.500l3.500-8 3.500 8H1115.500v21z" fill="#35f03a" />
          <path d="M1113.500 310h23v-1.500l8 3.500-8 3.500V314.500h-23z" fill="#f43c34" />
        </g>
      </Scene>
      <Scroll><Tri $dir="up" $s={3} /><Thumb $w={5} $h={116} $after={189} /><Tri $s={3} /></Scroll>
      <Scroll $row><Tri $dir="left" $s={3} /><Thumb $w={13} $h={5} style={{ marginRight: 8 }} /><Tri $dir="right" $s={3} /></Scroll>
    </DashBody>
    <ZoomBar>
      <svg width="11" height="11" viewBox="0 0 11 11"><circle cx="5.500" cy="5.500" r="4.500" fill={bar} stroke="#fff" /><path d="M4 4.500a1.500 1.500 0 1 1 2 1.300q-.5.200-.5 1M5.500 7.500v1" stroke="#fff" fill="none" /></svg>
      <span>Zoom = 322.4% (-85.78, 6.98)</span>
    </ZoomBar>
  </Panel>
);
const EdgeStrip = styled.div`
  flex: none;
  width: 3px;
  background: #f4f4f6;
`;

/* ---------- project options dialog ---------- */

const Dialog = styled.div`
  position: absolute;
  top: 110px;
  left: 311px;
  display: flex;
  flex-direction: column;
  width: 477px;
  height: 374px;
  padding: 0 9px 0 11px;
  border: 1px solid #7a6c96;
  background: #fff;
  box-shadow: 0 0 5px rgba(60, 50, 90, 0.55);
  font: 7px/9px ${dialogFont};
`;
const DialogTop = styled.div`
  display: flex;
  flex: none;
  justify-content: flex-end;
  height: 21px;
  padding-top: 5px;
  margin-right: -3px;
`;
const DialogBody = styled.div`
  display: grid;
  flex: none;
  grid-template-columns: 1fr 221px;
  gap: 14px;
  height: 323px;
  border-bottom: 1px solid #dcd8de;
`;
const Column = styled.div<{ $divided?: boolean }>`
  position: relative;
  display: flex;
  flex-direction: column;
  min-width: 0;
  ${p => p.$divided && css`&::after { content: ''; position: absolute; top: 4px; right: -8px; bottom: 0; width: 1px; background: #dcd8de; }`}
`;
const Heading = styled.h3<{ $ruled?: boolean }>`
  flex: none;
  height: 29px;
  margin: 0;
  border: 0 solid #e6e2e8;
  border-bottom-width: 1px;
  border-top-width: ${p => (p.$ruled ? 1 : 0)}px;
  margin-top: ${p => (p.$ruled ? 8 : 0)}px;
  font: 400 11px/26px "Open Sans", sans-serif;
  color: #8e80aa;
`;
const ChipBox = styled.div`
  display: grid;
  grid-template-columns: 1fr 10px;
  grid-template-rows: 1fr 10px;
  height: 92px;
  margin-top: 7px;
  border: 1px solid #dddbe0;
`;
const ChipTable = styled.table`
  width: 100%;
  height: 80px;
  border-collapse: collapse;
  table-layout: fixed;
  line-height: 9px;
  th, td { padding: 0 0 0 2px; font-weight: 400; text-align: left; white-space: nowrap; }
  thead th { height: 14px; border: solid #8d8494; border-width: 1px 0; }
  thead th:first-child { padding-left: 14px; }
  td:last-child { text-align: right; padding-right: 2px; }
`;
const ChipRow = styled.tr<{ $sel?: boolean }>`
  td:first-child {
    padding-left: 35px;
    background: linear-gradient(#e3dbe8, #e3dbe8) 17px 0 / 1px 100% no-repeat, linear-gradient(#e3dbe8, #e3dbe8) 27px 0 / 1px 100% no-repeat, linear-gradient(#e3dbe8, #e3dbe8) 28px 5px / 4px 1px no-repeat, linear-gradient(${p => (p.$sel ? '#a78fd0, #a78fd0' : '#fff, #fff')}) 33px 0 / 100% 100% no-repeat;
  }
  td + td { background: ${p => (p.$sel ? '#a78fd0' : 'none')}; }
  color: ${p => (p.$sel ? '#2a1145' : ink)};
`;
const Line = styled.div<{ $h?: number; $mt?: number }>`
  display: flex;
  flex: none;
  align-items: center;
  justify-content: space-between;
  height: ${p => p.$h ?? 9}px;
  margin-top: ${p => p.$mt ?? 0}px;
`;
const CheckLabel = styled.label`
  display: flex;
  align-items: center;
  gap: 2px;
`;
const Check = styled.input`
  appearance: none;
  width: 7px;
  height: 7px;
  border: 1px solid #857a90;
  background: #fff;
  &:checked {
    background:
      linear-gradient(45deg, transparent 40%, #555 40% 60%, transparent 60%) 0 2px / 3px 3px no-repeat,
      linear-gradient(-45deg, transparent 40%, #555 40% 60%, transparent 60%) 2px 0 / 4px 4px no-repeat;
  }
`;
const Push = styled.button<{ $w: number; $dim?: boolean; $h?: number }>`
  width: ${p => p.$w}px;
  height: ${p => p.$h ?? 14}px;
  border: 1px solid ${p => (p.$dim ? '#a79fb0' : '#75658c')};
  background: #fff;
  color: ${p => (p.$dim ? '#8a7d97' : ink)};
`;
const ConfigBox = styled.div`
  flex: none;
  height: 102px;
  border: 1px solid #dddbe0;
  overflow: hidden;
  display: grid;
  grid-template-columns: 1fr 11px;
`;
const ConfigTable = styled.table`
  width: 100%;
  border-collapse: collapse;
  table-layout: fixed;
  font-family: ${gridFont};
  th, td { padding: 0; font-weight: 400; text-align: left; white-space: nowrap; }
  thead th { height: 11px; line-height: 11px; border-right: 1px solid #e8e4ea; border-bottom: 1px solid #e8e4ea; font-family: ${dialogFont}; padding-left: 1px; }
  tbody td { height: 15px; padding-left: 3px; border-left: 1px solid ${line}; box-shadow: inset 0 -1px ${line}; }
  tbody th { height: 15px; box-shadow: inset 0 -1px ${line}; }
`;
const ConfigHead = styled.tr`
  background: ${band};
  && td { box-shadow: none; border-color: ${band}; }
  && td:first-child { padding-left: 2px; }
`;
const FieldLabel = styled.label<{ $mt: number }>`
  flex: none;
  height: 9px;
  margin-top: ${p => p.$mt}px;
`;
const TextField = styled.input`
  flex: none;
  height: 12px;
  margin-top: 1px;
  padding: 0 2px;
  border: 1px solid #d8d8dc;
`;
const MemoBox = styled.div`
  display: grid;
  grid-template-columns: 1fr 12px;
  grid-template-rows: 1fr 12px;
  height: 58px;
  margin-top: 1px;
  border: 1px solid #d8d8dc;
  textarea { resize: none; outline: 0; width: 100%; height: 100%; overflow: hidden; }
`;
const Half = styled.div`
  flex: none;
  width: 104px;
  margin-top: 2px;
`;
const DialogFooter = styled.div`
  display: flex;
  justify-content: flex-end;
  gap: 7px;
  padding-top: 6px;
`;

const chips = [
  ['16F684', '14', '20', '3584'], ['16F685', '20', '20', '7168'], ['16F687', '20', '20', '3584'],
  ['16F688', '14', '20', '7168'], ['16F689', '20', '20', '7168'], ['16F690', '20', '20', '7168'],
];
const config = [
  ['Oscilator', 'Bit 0-2', 'Internal RC Clockout'], ['Watch...', 'Bit 3', 'Off'], ['Power ...', 'Bit 4', 'Off'],
  ['Master ...', 'Bit 5', 'External'], ['Code P...', 'Bit 6', 'Off'],
];

const OptionsDialog = () => (
  <Dialog role="dialog" aria-label="Project options">
    <DialogTop><IconButton aria-label="Close dialog"><svg width="5" height="5" stroke="#555"><path d="M0 0l5 5M5 0L0 5" /></svg></IconButton></DialogTop>
    <DialogBody>
      <Column $divided>
        <Heading>Choose a Target</Heading>
        <ChipBox>
          <ChipTable>
            <colgroup><col /><col style={{ width: 25 }} /><col style={{ width: 39 }} /><col style={{ width: 21 }} /></colgroup>
            <thead><tr><th>Chip</th><th># Pins</th><th>Max MHz</th><th>Flash</th></tr></thead>
            <tbody>
              {chips.map((c, i) => <ChipRow key={c[0]} $sel={i === 5}>{c.map((v, k) => <td key={k}>{v}</td>)}</ChipRow>)}
            </tbody>
          </ChipTable>
          <Scroll $pad={5}><Tri $dir="up" /><Thumb $w={5} $h={5} $after={41} /><Tri /></Scroll>
          <Scroll $row><Tri $dir="left" /><Thumb $w={76} $h={5} style={{ marginRight: 'auto', marginLeft: 4 }} /><Tri $dir="right" /></Scroll>
        </ChipBox>
        <Heading $ruled>Configure</Heading>
        <Line $h={24}>
          <CheckLabel><Check type="checkbox" defaultChecked />Write config on download</CheckLabel>
          <Push $w={84} $dim style={{ marginRight: 4 }}>Download config now</Push>
        </Line>
        <ConfigBox>
          <ConfigTable>
            <colgroup><col style={{ width: 75 }} /><col style={{ width: 43 }} /><col /></colgroup>
            <thead><tr><th>Name</th><th>Size</th><th>Value</th></tr></thead>
            <tbody>
              <ConfigHead><td><Cell><Icon name="zPlus" /><NodeLabel $sel>0x1</NodeLabel></Cell></td><td>UINT</td><td>0x33f5</td></ConfigHead>
              {config.map(([n, s, v]) => (
                <tr key={n}>
                  <th><Cell><Gutter $w={33} $x={9} $v="full" $h /><NodeLabel>{n}</NodeLabel></Cell></th>
                  <td>{s}</td>
                  <td><Picker flat h={14} label={n} value={v} /></td>
                </tr>
              ))}
            </tbody>
          </ConfigTable>
          <Scroll $pad={17}><Tri $dir="up" /><Thumb $w={5} $h={34} $after={3} /><Tri style={{ marginBottom: -14 }} /></Scroll>
        </ConfigBox>
        <Line $h={20}><CheckLabel><Check type="checkbox" defaultChecked />Show descriptive names</CheckLabel></Line>
      </Column>
      <Column>
        <Heading>Project information</Heading>
        <FieldLabel $mt={6} htmlFor="title">Project title:</FieldLabel>
        <TextField id="title" />
        <FieldLabel $mt={3} htmlFor="memo">Detailed description:</FieldLabel>
        <MemoBox>
          <textarea id="memo" />
          <Scroll><Tri $dir="up" $c="#c0c0c0" /><Tri $c="#c0c0c0" /></Scroll>
          <Scroll $row><Tri $dir="left" $c="#c0c0c0" /><Tri $dir="right" $c="#c0c0c0" /></Scroll>
        </MemoBox>
        <Heading $ruled>Other options</Heading>
        <FieldLabel $mt={6} htmlFor="clock">Clock speed (MHz): [defines delay-related timings]</FieldLabel>
        <Half><Picker id="clock" label="Clock" value="4" /></Half>
        <FieldLabel $mt={6} htmlFor="speed">Simulation speed:</FieldLabel>
        <Half><Picker id="speed" label="Speed" value="Fast (no updates)" /></Half>
        <Line $mt={7}><CheckLabel><Check type="checkbox" />Use supplementary code</CheckLabel></Line>
        <Line $h={14} $mt={6}><Push $w={89} $dim style={{ marginLeft: 12 }}><u>S</u>upplementary Code...</Push></Line>
        <Line $mt={6}><CheckLabel><Check type="checkbox" />Auto clear watchdog</CheckLabel></Line>
        <Line $mt={6}><CheckLabel><Check type="checkbox" />Use #if in constant decisions</CheckLabel></Line>
        <FieldLabel $mt={6} htmlFor="port">Programmer Port:</FieldLabel>
        <Half><Picker id="port" label="Port" value="" c="#9a90a4" /></Half>
      </Column>
    </DialogBody>
    <DialogFooter>
      <Push $w={56} $h={15}>Modify</Push>
      <Push $w={56} $h={15}>Cancel</Push>
    </DialogFooter>
  </Dialog>
);

/* ---------- status bar and taskbar ---------- */

const StatusBar = styled.footer`
  display: flex;
  flex: none;
  align-items: center;
  height: 12px;
  padding: 0 5px 0 3px;
  background: ${bar};
  color: #fff;
`;
const StatusText = styled.span<{ $w?: number; $dim?: boolean }>`
  flex: none;
  width: ${p => (p.$w ? `${p.$w}px` : 'auto')};
  margin-left: ${p => (p.$w ? 0 : 5)}px;
  white-space: nowrap;
  color: ${p => (p.$dim ? '#a99bc0' : '#fff')};
`;
const Taskbar = styled.footer`
  display: flex;
  flex: none;
  align-items: stretch;
  height: 28px;
  border-bottom: 3px solid #000;
  background: linear-gradient(90deg, #20353a, #22343f 45%, #1b2842 80%, #182640);
  color: #f2f2f2;
  font-family: "Open Sans", sans-serif;
`;
const SearchBox = styled.label`
  display: flex;
  align-items: center;
  gap: 7px;
  width: 179px;
  padding-left: 7px;
  background: #f1f1f1;
  overflow: hidden;
  input { flex: 1; min-width: 0; font: 9px/12px "Open Sans", sans-serif; outline: 0; }
  input::placeholder { color: #2c2c2c; opacity: 1; }
`;
const TaskButton = styled.button<{ $open?: boolean; $active?: boolean }>`
  display: flex;
  align-items: center;
  justify-content: center;
  width: 30px;
  border-bottom: 2px solid ${p => (p.$open ? '#76b9ed' : 'transparent')};
  background: ${p => (p.$active ? '#4f6168' : 'none')};
  background-clip: padding-box;
`;
const Tray = styled.div`
  display: flex;
  align-items: center;
  gap: 5px;
  margin-left: auto;
  padding-right: 5px;
`;
const Projects = styled.span`
  font-size: 8px;
`;
const More = styled.span`
  align-self: flex-start;
  margin: 0 14px 0 0;
  font-size: 9px;
  line-height: 12px;
`;
const Weather = styled.span`
  margin: 0 4px 0 0;
  font-size: 8px;
  white-space: pre;
`;
const Clock = styled.time`
  width: 34px;
  margin: 0 4px;
  line-height: 11px;
  text-align: center;
`;
const Badge = styled.span`
  position: relative;
  b { position: absolute; left: 5px; top: 5px; width: 9px; height: 9px; border-radius: 5px; background: #555; font: 6px/9px "Open Sans", sans-serif; text-align: center; }
`;
const FlowcodeLogo = () => (
  <svg width="15" height="16" viewBox="0 0 15 16"><path d="M0 0h15v16H0z" fill="#5d2a78" /><path d="M2.500 14V2.500h9.500v3H6.500v4M6.500 7.500H2.500M13 8H8v5.500h5" stroke="#a56cc0" fill="none" /></svg>
);

const Bottom = () => (
  <>
    <StatusBar>
      <span>Welcome to Flowcode v9 - for Help, press F1</span>
      <Spacer />
      <StatusText $w={150}>Registered to: kkabuu (31744195)</StatusText>
      <StatusText $w={102}>Current zoom = 75%</StatusText>
      <StatusText $dim>CAP</StatusText>
      <StatusText>NUM</StatusText>
      <StatusText $dim>SCRL</StatusText>
    </StatusBar>
    <Taskbar>
      <TaskButton aria-label="Start"><svg width="10" height="10"><path d="M0 1.500l4.500-.7v4H0zM5.200.700L10 0v4.800H5.200zM0 5.400h4.500v4L0 8.800zM5.200 5.400H10V10l-4.800-.6z" fill="#fff" /></svg></TaskButton>
      <SearchBox>
        <svg width="10" height="11" viewBox="0 0 10 11" stroke="#333" fill="none"><circle cx="6" cy="4" r="3.500" /><path d="M3.500 6.500L0 10.500" /></svg>
        <input placeholder="Type here to search" />
        <svg width="46" height="25" viewBox="0 0 46 25">
          <path d="M0 25q2-10 13-12 18-4 26 2 4 4 7 10z" fill="#8a9a2c" />
          <ellipse cx="21" cy="20" rx="13" ry="4" fill="#2d3514" />
          <path d="M13 21q-3-6 1-11-4 0-7-4 3-3 8-3 5-4 9 0 5 3 4 9l2 9q-8 3-17 0z" fill="#8f7560" />
          <path d="M7 6q3-3 8-2l-2 3q-4 1-6-1z" fill="#c9b8a6" />
          <circle cx="8" cy="5" r="1" fill="#222" /><circle cx="17" cy="5" r=".8" fill="#222" />
          <path d="M17 16q5 2 10-1M14 19l-2 3M27 19l2 3" stroke="#6a523f" fill="none" />
          <path d="M34 18q6-2 11 7H30z" fill="#b2bd3e" />
        </svg>
      </SearchBox>
      <TaskButton aria-label="Task view"><svg width="10" height="10" stroke="#e8e8e8" fill="none"><path d="M.500 0v2h6V0M.500 3.500h6v3h-6zM.500 10V8h6v2M9 0v10M8 5h2" /></svg></TaskButton>
      <TaskButton aria-label="File Explorer"><svg width="14" height="12"><path d="M0 0h5l1.500 2H14v10H0z" fill="#f5c242" /><path d="M0 4h14v8H0z" fill="#fbdc78" /><path d="M3 7h8v5H9V9H5v3H3z" fill="#3d8fd9" /></svg></TaskButton>
      <TaskButton aria-label="Launcher"><svg width="10" height="15"><path d="M7 0l2.500 4-.5 5 1 2-4 1-3 3-.5-3L0 11l2-3z" fill="#e0383a" /></svg></TaskButton>
      <TaskButton $open aria-label="Chrome"><svg width="15" height="15" viewBox="0 0 14 14"><circle cx="7" cy="7" r="7" fill="#e33b2e" /><path d="M7 7L1 3.500A7 7 0 0 0 6.500 14l3.500-6z" fill="#2ca24c" /><path d="M7 7L6.500 14A7 7 0 0 0 13.300 4H7z" fill="#fbc116" /><circle cx="7" cy="7" r="3.200" fill="#fff" /><circle cx="7" cy="7" r="2.500" fill="#4285f4" /></svg></TaskButton>
      <TaskButton aria-label="Flowcode"><FlowcodeLogo /></TaskButton>
      <TaskButton aria-label="Calculator"><svg width="11" height="15"><path d="M0 0h11v15H0z" fill="#dfe6ea" /><path d="M0 0h11v5H0z" fill="#38b3e6" /><path d="M1 6.500h2v2H1zM4.500 6.500h2v2h-2zM1 9.500h2v2H1zM4.500 9.500h2v2h-2zM1 12.500h2v2H1zM4.500 12.500h2v2h-2z" fill="#5b6b78" /><path d="M8 6.500h2v8H8z" fill="#2f7fb8" /></svg></TaskButton>
      <TaskButton $open $active aria-label="Flowcode project"><FlowcodeLogo /></TaskButton>
      <TaskButton $open aria-label="PICkit 2"><svg width="16" height="16" viewBox="0 0 16 16"><path d="M0 0h16v16H0z" /><text x="0" y="5" fontSize="5" fontWeight="700" fill="#fff" fontFamily="Liberation Sans">PICkit</text><text x="6" y="15" fontSize="12" fontWeight="700" fill="#f01818" fontFamily="Liberation Sans">2</text></svg></TaskButton>
      <Tray>
        <Projects>Projects</Projects>
        <More>»</More>
        <svg width="16" height="14" viewBox="0 0 16 14"><circle cx="11" cy="5" r="4.500" fill="#f2a32c" /><path d="M4 13a3.500 3.500 0 0 1 0-6q2-4 6-1.500Q15 6 15 10q0 3-3 3z" fill="#c9dcf5" /></svg>
        <Weather>41°F  Mostly cloudy</Weather>
        <svg width="8" height="5" stroke="#fff" fill="none"><path d="M.500 4.500L4 1l3.500 3.500" /></svg>
        <svg width="9" height="11" viewBox="0 0 9 11" stroke="#fff" fill="none"><rect x="1.500" y="3.500" width="6" height="5" rx="1" /><path d="M2 1.500h5M2 10.500h5M4.500 5v2" /></svg>
        <svg width="11" height="10" viewBox="0 0 11 10"><path d="M0 7q0-3 3-3 1-3 4-2 3 0 3 4H2z" fill="#ccc" /><circle cx="7.500" cy="7" r="3" fill="#d8262c" /><path d="M6.500 6l2 2M8.500 6l-2 2" stroke="#fff" /></svg>
        <svg width="11" height="10" stroke="#fff" fill="none"><path d="M1.500 2.500h9v5h-9zM4 9.500h4M.500 0v5M6 7.500v2" /></svg>
        <svg width="10" height="8" stroke="#fff" fill="none"><path d="M.500 3h1.500L4.500.500v7L2 5H.500zM6 2.500l3 3M9 2.500l-3 3" /></svg>
        <Clock>1:25 PM<br />2/2/2023</Clock>
        <Badge><svg width="11" height="11"><path d="M0 0h11v8H4v3L2 8H0z" fill="#fff" /><path d="M2 2.500h7M2 5.500h7" stroke="#1b2842" /></svg><b>8</b></Badge>
        <svg width="10" height="25" stroke="#4a5568"><path d="M8.500 0v25" /></svg>
      </Tray>
    </Taskbar>
  </>
);

export default function App() {
  return (
    <Screen>
      <Global />
      <TopArea />
      <Workspace>
        <Explorer />
        <Splitter />
        <Flowchart />
        <Splitter />
        <Properties />
        <Splitter />
        <Dashboard />
        <EdgeStrip />
      </Workspace>
      <OptionsDialog />
      <Bottom />
    </Screen>
  );
}
